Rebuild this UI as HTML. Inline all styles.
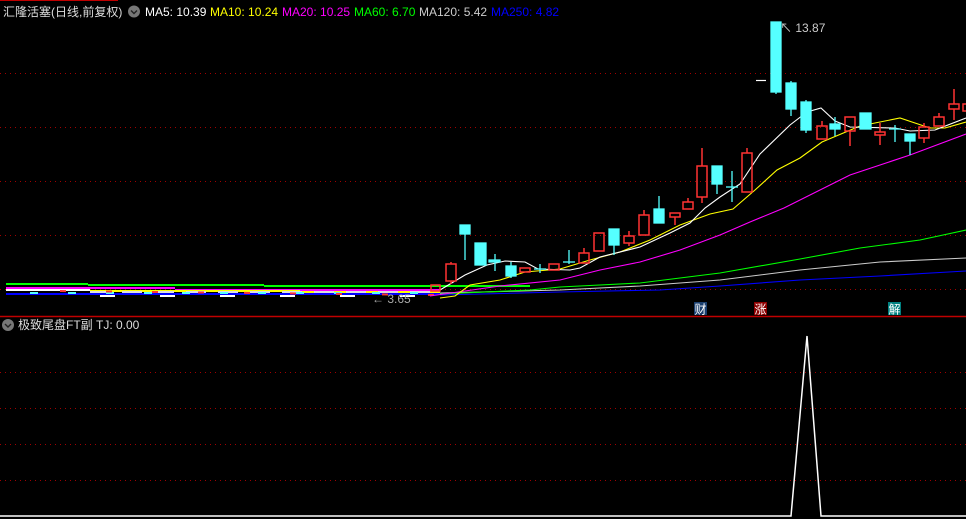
<!DOCTYPE html>
<html><head><meta charset="utf-8"><style>
html,body{margin:0;padding:0;background:#000;width:966px;height:519px;overflow:hidden}
svg{display:block}
text{font-family:"Liberation Sans","Noto Sans CJK SC",sans-serif;font-size:12px}
</style></head><body>
<svg width="966" height="519" viewBox="0 0 966 519" xmlns="http://www.w3.org/2000/svg">
<rect width="966" height="519" fill="#000"/>
<line x1="0" y1="0.5" x2="118" y2="0.5" stroke="#c00000"/>
<g stroke="#a00000" stroke-dasharray="1,4" stroke-width="1">
<line x1="0" y1="73.5" x2="966" y2="73.5"/><line x1="0" y1="127.5" x2="966" y2="127.5"/>
<line x1="0" y1="181.5" x2="966" y2="181.5"/><line x1="0" y1="235.5" x2="966" y2="235.5"/>
<line x1="0" y1="289.5" x2="966" y2="289.5"/>
<line x1="0" y1="372.5" x2="966" y2="372.5"/><line x1="0" y1="408.5" x2="966" y2="408.5"/>
<line x1="0" y1="444.5" x2="966" y2="444.5"/><line x1="0" y1="480.5" x2="966" y2="480.5"/>
</g>
<line x1="0" y1="316.5" x2="966" y2="316.5" stroke="#c00000" stroke-width="1.5"/>
<g stroke-width="2">
<line x1="6" y1="284" x2="88" y2="284" stroke="#00ff00"/><line x1="88" y1="285" x2="264" y2="285" stroke="#00ff00"/><line x1="264" y1="286" x2="530" y2="286" stroke="#00ff00"/>
<line x1="6" y1="288" x2="175" y2="288" stroke="#ff00ff"/><line x1="175" y1="290" x2="440" y2="290" stroke="#ff00ff"/>
<line x1="6" y1="290" x2="90" y2="290" stroke="#fff"/><line x1="90" y1="291" x2="300" y2="291" stroke="#ffff00"/><line x1="300" y1="292" x2="440" y2="292" stroke="#ffff00"/>
<line x1="6" y1="294" x2="175" y2="294" stroke="#0000ff"/><line x1="175" y1="294" x2="440" y2="294" stroke="#0000ff"/>
<line x1="90" y1="292" x2="440" y2="292" stroke="#ddd" stroke-dasharray="20,12"/>
<line x1="30" y1="293" x2="440" y2="293" stroke="#55ffff" stroke-dasharray="8,30"/>
<line x1="60" y1="291" x2="440" y2="295" stroke="#ff3333" stroke-dasharray="6,40"/>
<line x1="100" y1="296" x2="440" y2="296" stroke="#fff" stroke-dasharray="15,45"/>
</g>
<text x="372" y="303" fill="#aaa">← 3.65</text>
<g fill="none" stroke-width="1.1">
<polyline stroke="#0000ff" points="440,295 560,292 660,290 720,286 800,280 880,276 966,271"/>
<polyline stroke="#cccccc" points="440,293 560,290 640,286 720,280 800,270 880,262 966,258"/>
<polyline stroke="#00ff00" points="440,294 530,290 560,287 640,283 720,273 800,259 860,248 920,240 966,230"/>
<polyline stroke="#ff00ff" points="430,296 500,286 560,280 600,270 640,262 680,250 720,235 750,222 784,208 850,175 910,155 966,134"/>
<polyline stroke="#ffff00" points="440,298 455,296 470,285 500,280 525,272 560,269 590,260 620,252 650,240 680,225 710,214 733,209 755,190 777,170 800,158 822,142 860,126 900,118 912,122 930,128 945,128 966,122"/>
<polyline stroke="#ffffff" points="440,290 465,275 487,265 505,261 525,262 538,269 570,270 580,268 600,257 640,247 670,233 690,223 705,208 720,197 740,184 760,154 790,125 807,112 821,108 835,121 850,127 895,128 910,131 935,130 966,118"/>
</g>
<g fill="none" stroke="#ff3333" stroke-width="1.5">
<rect x="431" y="285" width="9" height="6"/>
<rect x="446" y="264" width="10" height="17"/><line x1="451" y1="262" x2="451" y2="264"/><line x1="451" y1="281" x2="451" y2="284"/>
<rect x="520" y="268" width="10" height="4"/>
<rect x="549" y="264" width="10" height="6"/>
<rect x="579" y="253" width="10" height="10"/><line x1="584" y1="248" x2="584" y2="253"/>
<rect x="594" y="233" width="10" height="18"/>
<rect x="624" y="236" width="10" height="7"/><line x1="629" y1="231" x2="629" y2="236"/><line x1="629" y1="243" x2="629" y2="246"/>
<rect x="639" y="215" width="10" height="20"/><line x1="644" y1="210" x2="644" y2="215"/>
<rect x="670" y="213" width="10" height="4"/><line x1="675" y1="217" x2="675" y2="225"/>
<rect x="683" y="202" width="10" height="7"/><line x1="688" y1="198" x2="688" y2="202"/>
<rect x="697" y="166" width="10" height="31"/><line x1="702" y1="148" x2="702" y2="166"/><line x1="702" y1="197" x2="702" y2="203"/>
<rect x="742" y="153" width="10" height="39"/><line x1="747" y1="148" x2="747" y2="153"/>
<rect x="817" y="126" width="10" height="13"/><line x1="822" y1="121" x2="822" y2="126"/>
<rect x="845" y="117" width="10" height="14"/><line x1="850" y1="131" x2="850" y2="146"/>
<rect x="875" y="132" width="10" height="3"/><line x1="880" y1="123" x2="880" y2="132"/><line x1="880" y1="135" x2="880" y2="145"/>
<rect x="919" y="127" width="10" height="11"/><line x1="924" y1="123" x2="924" y2="127"/><line x1="924" y1="138" x2="924" y2="143"/>
<rect x="934" y="117" width="10" height="9"/><line x1="939" y1="113" x2="939" y2="117"/>
<rect x="949" y="104" width="10" height="5"/><line x1="954" y1="89" x2="954" y2="104"/><line x1="954" y1="109" x2="954" y2="120"/>
<rect x="963" y="104" width="6" height="7"/>
</g>
<g fill="#55ffff" stroke="#55ffff" stroke-width="1.3">
<rect x="460" y="225" width="10" height="9"/><line x1="465" y1="234" x2="465" y2="260"/>
<rect x="475" y="243" width="11" height="22"/>
<rect x="489" y="260" width="11" height="2"/><line x1="495" y1="254" x2="495" y2="271"/>
<rect x="506" y="266" width="10" height="10"/><line x1="511" y1="262" x2="511" y2="278"/>
<line x1="534" y1="269" x2="546" y2="269"/><line x1="540" y1="264" x2="540" y2="273"/>
<line x1="563" y1="262" x2="575" y2="262"/><line x1="569" y1="250" x2="569" y2="264"/>
<rect x="609" y="229" width="10" height="16"/><line x1="614" y1="245" x2="614" y2="255"/>
<rect x="654" y="209" width="10" height="14"/><line x1="659" y1="196" x2="659" y2="209"/>
<rect x="712" y="166" width="10" height="18"/><line x1="717" y1="184" x2="717" y2="194"/>
<line x1="726" y1="187" x2="738" y2="187"/><line x1="732" y1="171" x2="732" y2="202"/>
<rect x="771" y="22" width="10" height="70"/><line x1="776" y1="92" x2="776" y2="94"/>
<rect x="786" y="83" width="10" height="26"/><line x1="791" y1="81" x2="791" y2="116"/>
<rect x="801" y="102" width="10" height="28"/><line x1="806" y1="100" x2="806" y2="133"/>
<rect x="830" y="124" width="10" height="5"/><line x1="835" y1="117" x2="835" y2="136"/>
<rect x="860" y="113" width="11" height="16"/>
<line x1="889" y1="129" x2="901" y2="129"/><line x1="895" y1="125" x2="895" y2="142"/>
<rect x="905" y="134" width="10" height="7"/><line x1="910" y1="141" x2="910" y2="155"/>
</g>
<line x1="756" y1="80.5" x2="766" y2="80.5" stroke="#fff" stroke-width="1.2"/>
<text x="780" y="32" fill="#ccc">↖ 13.87</text>
<rect x="694" y="302" width="13" height="13" fill="#1a3f6e"/><text x="694.5" y="313.5" fill="#fff">财</text>
<rect x="754" y="302" width="13" height="13" fill="#8b0000"/><text x="754.5" y="313.5" fill="#fff">涨</text>
<rect x="888" y="302" width="13" height="13" fill="#008080"/><text x="888.5" y="313.5" fill="#fff">解</text>
<text x="3" y="16" fill="#ddd">汇隆活塞(日线,前复权)</text>
<circle cx="134" cy="11.5" r="6" fill="#777"/><path d="M131 10.5 L134 13.5 L137 10.5" stroke="#222" fill="none" stroke-width="1.4"/>
<text x="145" y="16" fill="#fff">MA5: 10.39</text>
<text x="210" y="16" fill="#ffff00">MA10: 10.24</text>
<text x="282" y="16" fill="#ff00ff">MA20: 10.25</text>
<text x="354" y="16" fill="#00ff00">MA60: 6.70</text>
<text x="419" y="16" fill="#ccc">MA120: 5.42</text>
<text x="491" y="16" fill="#0000ff">MA250: 4.82</text>
<circle cx="8" cy="325" r="6" fill="#777"/><path d="M5 324 L8 327 L11 324" stroke="#222" fill="none" stroke-width="1.4"/>
<text x="18" y="329" fill="#ddd">极致尾盘FT副  TJ: 0.00</text>
<polyline fill="none" stroke="#fff" stroke-width="1.5" points="0,516 791,516 807,336 821,516 966,516"/>
</svg>
</body></html>
